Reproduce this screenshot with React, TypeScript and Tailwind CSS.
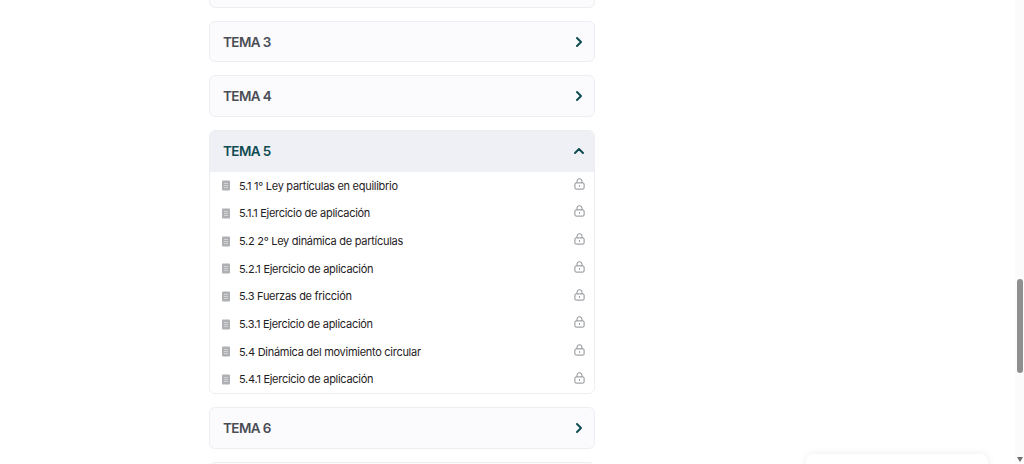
import React from 'react';
import { ChevronRight, ChevronUp } from 'lucide-react';

const lessons = [
  '5.1 1° Ley partículas en equilibrio',
  '5.1.1 Ejercicio de aplicación',
  '5.2 2° Ley dinámica de partículas',
  '5.2.1 Ejercicio de aplicación',
  '5.3 Fuerzas de fricción',
  '5.3.1 Ejercicio de aplicación',
  '5.4 Dinámica del movimiento circular',
  '5.4.1 Ejercicio de aplicación',
];

const DocIcon = () => (
  <svg width="8" height="11" viewBox="0 0 8 11" className="shrink-0">
    <rect x="0" y="0.5" width="8" height="10" rx="1" fill="#aeb0b3" />
    <path d="M2 3.5h4M2 5.5h4M2 7.5h4" stroke="#d6d7d9" strokeWidth="0.9" />
  </svg>
);

const LockIcon = () => (
  <svg width="11" height="12" viewBox="0 0 11 12" fill="none" stroke="#8b8e92" strokeWidth="1" className="shrink-0">
    <rect x="0.9" y="4.9" width="9.2" height="6.2" rx="1.2" />
    <path d="M3 4.9V3.2a2.5 2.5 0 0 1 5 0v1.7" />
    <path d="M5.5 7.2v1.6" />
  </svg>
);

// the cards cut by the top and bottom of the window show only their frame
const ClosedTema = ({ title }: { title?: string }) => (
  <div className="flex h-[41.5px] items-center justify-between rounded-md border border-[#eceef2] bg-[#fbfbfd] pl-[13px] pr-[7px]">
    <span className="text-[13.5px] font-semibold tracking-[-0.6px] text-[#4b4d55]">{title}</span>
    {title && <ChevronRight className="h-[16px] w-[16px] text-[#0f4c52]" strokeWidth={3} />}
  </div>
);

export default function App() {
  return (
    <div className="relative flex h-[464px] w-[1024px] overflow-hidden bg-white font-['Inter',sans-serif]">
      <main className="flex-1 pl-[209px]">
        <div className="-mt-[33.6px] flex w-[386px] flex-col gap-[13px]">
          <ClosedTema />
          <ClosedTema title="TEMA 3" />
          <ClosedTema title="TEMA 4" />

          <div className="overflow-hidden rounded-md border border-[#eceef2] bg-white">
            <div className="flex h-[41px] items-center justify-between bg-[#eff0f5] pl-[13px] pr-[7px]">
              <span className="text-[13.5px] font-semibold tracking-[-0.6px] text-[#0f4c52]">TEMA 5</span>
              <ChevronUp className="h-[16px] w-[16px] text-[#0f4c52]" strokeWidth={3} />
            </div>
            <ul>
              {lessons.map((lesson) => (
                <li key={lesson} className="flex h-[27.7px] items-center pl-[12px] pr-[9px]">
                  <DocIcon />
                  <span className="ml-[9px] flex-1 text-[11px] tracking-[-0.28px] text-[#1f2125]">{lesson}</span>
                  <span className="-mt-[4px]">
                    <LockIcon />
                  </span>
                </li>
              ))}
            </ul>
          </div>

          <ClosedTema title="TEMA 6" />
          <ClosedTema />
        </div>
      </main>

      <div className="flex w-[9px] flex-col items-center bg-[#fbfbfb]">
        <div className="mt-[279px] h-[94px] w-[6px] rounded-full bg-[#8f8f8f]" />
        <div className="mt-auto mb-[2px] h-0 w-0 border-x-[3.5px] border-t-[5px] border-x-transparent border-t-[#6f6f6f]" />
      </div>

      <div className="absolute left-[806px] top-[454px] h-[40px] w-[182px] rounded-lg bg-white shadow-[0_0_8px_rgba(0,0,0,0.08)]" />
    </div>
  );
}
